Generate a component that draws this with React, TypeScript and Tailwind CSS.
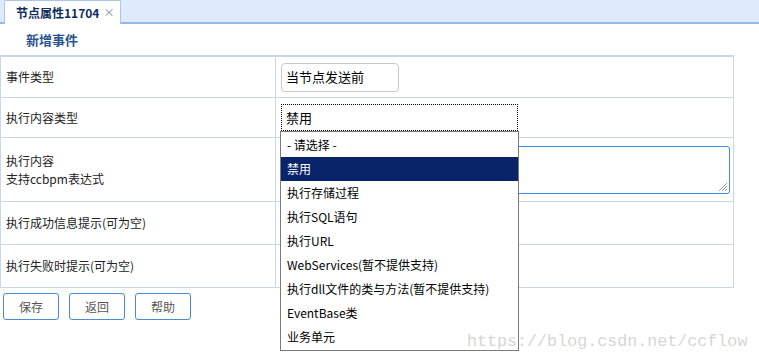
import React from "react";

const font = { fontFamily: '"Noto Sans CJK SC", "Noto Sans", sans-serif' };

const options = [
  "- 请选择 -",
  "禁用",
  "执行存储过程",
  "执行SQL语句",
  "执行URL",
  "WebServices(暂不提供支持)",
  "执行dll文件的类与方法(暂不提供支持)",
  "EventBase类",
  "业务单元",
];

function Row({ label, h, children }: { label: React.ReactNode; h: string; children?: React.ReactNode }) {
  return (
    <div className={`flex border-b border-[#c8d6e5] ${h}`}>
      <div className="w-[275px] shrink-0 border-r border-[#c8d6e5] flex items-center pl-[5px] text-[12px] text-[#222] leading-[18px]">
        {label}
      </div>
      <div className="flex-1 relative px-[5px] flex items-center">{children}</div>
    </div>
  );
}

export default function App() {
  return (
    <div className="relative w-[759px] h-[363px] bg-white overflow-hidden" style={font}>
      {/* Tab strip */}
      <div className="h-[24px] bg-[#dfeafc] border-b-2 border-[#95b9e6] flex items-end pl-[4px]">
        <div className="h-[24px] -mb-[2px] pl-[11px] pr-[6px] bg-white border border-b-0 border-[#a9c5ec] rounded-t-[2px] flex items-center gap-[4px]">
          <span className="text-[12px] font-bold text-[#0e2c5c]">节点属性11704</span>
          <span className="text-[11px] text-[#7b8ea8] leading-none">×</span>
        </div>
      </div>

      {/* Heading */}
      <div className="h-[31px] pl-[26px] flex items-center text-[13px] font-bold text-[#2a5490]">新增事件</div>

      {/* Form table */}
      <div className="w-[734px] border-t-2 border-l border-r border-[#c8d6e5]">
        <Row label="事件类型" h="h-[41px]">
          <div className="w-[118px] h-[29px] border border-[#c9c9c9] rounded-[4px] flex items-center pl-[4px] text-[13px] text-black">
            当节点发送前
          </div>
        </Row>
        <Row label="执行内容类型" h="h-[40px]">
          <div className="w-[237px] h-[27px] border border-dotted border-black flex items-center pl-[4px] text-[13px] text-black">
            禁用
          </div>
          <div className="absolute left-[4px] top-[33px] z-10 w-[239px] bg-white border border-[#7a7a7a] py-[1px]">
            {options.map((o, i) => (
              <div
                key={o}
                className={`h-[24px] flex items-center pl-[6px] text-[12px] ${
                  i === 1 ? "bg-[#0a246a] text-white" : "text-black"
                }`}
              >
                {o}
              </div>
            ))}
          </div>
        </Row>
        <Row
          label={
            <div>
              <div>执行内容</div>
              <div>支持ccbpm表达式</div>
            </div>
          }
          h="h-[64px]"
        >
          <div className="relative w-[449px] h-[48px] border border-[#3b8ee8] rounded-[3px]">
            <svg className="absolute right-[1px] bottom-[1px]" width="12" height="12" viewBox="0 0 12 12">
              <path d="M11 3L3 11M11 6L6 11M11 9L9 11" stroke="#9a9a9a" strokeWidth="1" />
            </svg>
          </div>
        </Row>
        <Row label="执行成功信息提示(可为空)" h="h-[43px]" />
        <Row label="执行失败时提示(可为空)" h="h-[43px]" />
      </div>

      {/* Buttons */}
      <div className="flex gap-[10px] pl-[3px] pt-[5px]">
        {["保存", "返回", "帮助"].map((b) => (
          <div
            key={b}
            className="w-[56px] h-[27px] border border-[#4a8bd6] rounded-[3px] flex items-center justify-center text-[12px] text-[#555]"
          >
            {b}
          </div>
        ))}
      </div>

      {/* Watermark */}
      <div
        className="absolute z-20 left-[467px] top-[332px] text-[16.7px] text-[#d6d6d6] leading-[20px]"
        style={{ fontFamily: '"Liberation Mono", monospace' }}
      >
        https://blog.csdn.net/ccflow
      </div>
    </div>
  );
}
